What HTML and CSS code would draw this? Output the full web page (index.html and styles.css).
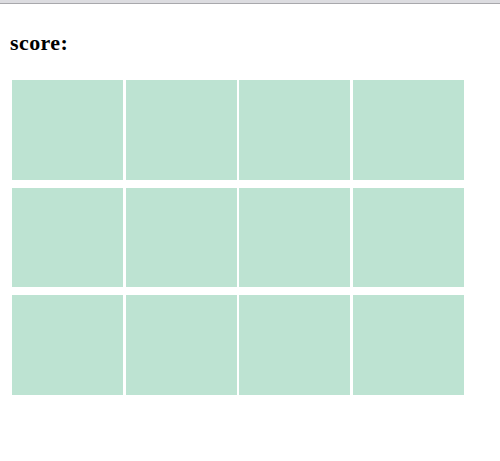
FILE: index.html
```html
<!DOCTYPE html>
<html>
<head>
<meta charset="utf-8">
<link rel="stylesheet" href="styles.css">
</head>
<body>
<div class="topbar"></div>
<h2 class="score">score:</h2>
<div class="board">
  <div class="cell"></div><div class="cell"></div><div class="cell"></div><div class="cell"></div>
  <div class="cell"></div><div class="cell"></div><div class="cell"></div><div class="cell"></div>
  <div class="cell"></div><div class="cell"></div><div class="cell"></div><div class="cell"></div>
</div>
</body>
</html>
```
FILE: styles.css
```css
html, body {
  margin: 0;
  padding: 0;
  background: #ffffff;
}
body {
  font-family: "Liberation Serif", "Times New Roman", serif;
}
.topbar {
  height: 3px;
  background: #dcdce0;
  border-bottom: 1px solid #a8a8ac;
}
.score {
  margin: 0;
  padding: 27px 0 0 10px;
  height: 47px;
  box-sizing: border-box;
  font-size: 22px;
  font-weight: bold;
  letter-spacing: 0.4px;
  line-height: 24px;
  color: #000;
}
.board {
  display: grid;
  grid-template-columns: repeat(4, 111px);
  grid-auto-rows: 99.5px;
  column-gap: 2.6px;
  row-gap: 8px;
  margin: 29px 0 0 12px;
}
.cell {
  background: #bde3d2;
}
```
